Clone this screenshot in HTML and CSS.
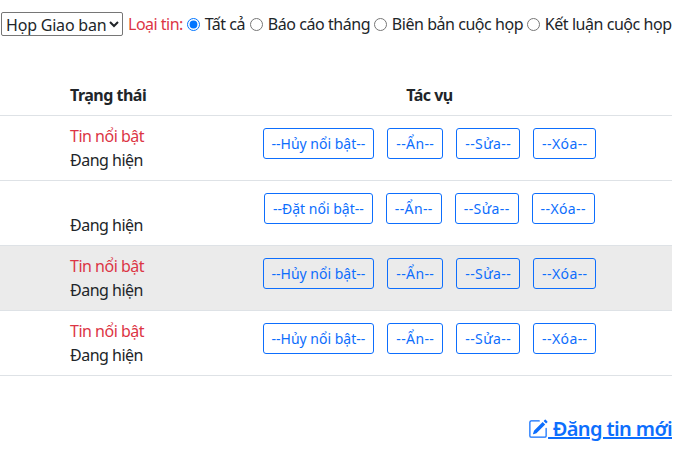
FILE: index.html
```html
<!DOCTYPE html>
<html lang="en">
<head>
  <meta charset="UTF-8">
  <meta name="viewport" content="width=device-width, initial-scale=1.0">
  <title>Đăng tin</title>
  <link rel="stylesheet" href="styles.css">
</head>
<body>
  <div class="container">
    <!-- Filter bar -->
    <div class="filter-bar">
      <select class="group-select">
        <option>Họp Giao ban</option>
      </select>
      <span class="filter-label">Loại tin:</span>
      <label class="radio"><input type="radio" name="loai" checked> Tất cả</label>
      <label class="radio"><input type="radio" name="loai"> Báo cáo tháng</label>
      <label class="radio"><input type="radio" name="loai"> Biên bản cuộc họp</label>
      <label class="radio"><input type="radio" name="loai"> Kết luận cuộc họp</label>
    </div>

    <!-- News table -->
    <table class="news-table">
      <thead>
        <tr>
          <th class="col-blank"></th>
          <th class="col-status">Trạng thái</th>
          <th class="col-actions">Tác vụ</th>
        </tr>
      </thead>
      <tbody>
        <tr>
          <td></td>
          <td><div class="hot">Tin nổi bật</div><div>Đang hiện</div></td>
          <td>
            <div class="actions">
              <button class="btn btn-wide">--Hủy nổi bật--</button>
              <button class="btn">--Ẩn--</button>
              <button class="btn">--Sửa--</button>
              <button class="btn">--Xóa--</button>
            </div>
          </td>
        </tr>
        <tr>
          <td></td>
          <td><div class="hot">&nbsp;</div><div>Đang hiện</div></td>
          <td>
            <div class="actions">
              <button class="btn btn-wide">--Đặt nổi bật--</button>
              <button class="btn">--Ẩn--</button>
              <button class="btn">--Sửa--</button>
              <button class="btn">--Xóa--</button>
            </div>
          </td>
        </tr>
        <tr class="shaded">
          <td></td>
          <td><div class="hot">Tin nổi bật</div><div>Đang hiện</div></td>
          <td>
            <div class="actions">
              <button class="btn btn-wide">--Hủy nổi bật--</button>
              <button class="btn">--Ẩn--</button>
              <button class="btn">--Sửa--</button>
              <button class="btn">--Xóa--</button>
            </div>
          </td>
        </tr>
        <tr>
          <td></td>
          <td><div class="hot">Tin nổi bật</div><div>Đang hiện</div></td>
          <td>
            <div class="actions">
              <button class="btn btn-wide">--Hủy nổi bật--</button>
              <button class="btn">--Ẩn--</button>
              <button class="btn">--Sửa--</button>
              <button class="btn">--Xóa--</button>
            </div>
          </td>
        </tr>
      </tbody>
    </table>

    <div class="footer">
      <a class="new-link" href="#">
        <svg class="new-icon" viewBox="0 0 16 16" fill="currentColor">
          <path d="M15.502 1.94a.5.5 0 0 1 0 .706L14.459 3.69l-2-2L13.502.646a.5.5 0 0 1 .707 0l1.293 1.293zm-1.75 2.456-2-2L4.939 9.21a.5.5 0 0 0-.121.196l-.805 2.414a.25.25 0 0 0 .316.316l2.414-.805a.5.5 0 0 0 .196-.12l6.813-6.814z"/>
          <path fill-rule="evenodd" d="M1 13.5A1.5 1.5 0 0 0 2.5 15h11a1.5 1.5 0 0 0 1.5-1.5v-6a.5.5 0 0 0-1 0v6a.5.5 0 0 1-.5.5h-11a.5.5 0 0 1-.5-.5v-11a.5.5 0 0 1 .5-.5H9a.5.5 0 0 0 0-1H2.5A1.5 1.5 0 0 0 1 2.5v11z"/>
        </svg>
        Đăng tin mới
      </a>
    </div>
  </div>
</body>
</html>
```

FILE: styles.css
```css
* {
  box-sizing: border-box;
}

body {
  margin: 0;
  background: #fff;
  color: #212529;
  font-family: "Noto Sans", "Open Sans", sans-serif;
  font-size: 16px;
  line-height: 24px;
  letter-spacing: -0.5px;
}

.container {
  width: 672px;
}

.filter-bar {
  display: flex;
  align-items: center;
  gap: 4px;
  height: 24px;
  margin-top: 12px;
  white-space: nowrap;
}

.group-select {
  width: 122px;
  height: 24px;
  margin-left: 1px;
  margin-right: 1px;
  font: inherit;
  letter-spacing: -0.2px;
  color: #212529;
  background: #fff;
  border: 1px solid #767676;
  border-radius: 2px;
}

.filter-label {
  color: #dc3545;
}

.radio {
  letter-spacing: -0.45px;
}

.radio:first-of-type {
  margin-right: 1px;
}

.radio input {
  margin: 0 1px 0 0;
  vertical-align: -1px;
}

.news-table {
  width: 672px;
  margin-top: 39px;
  border-collapse: collapse;
  table-layout: fixed;
}

.news-table th,
.news-table td {
  padding: 8px;
  border-bottom: 1px solid #dee2e6;
  vertical-align: top;
}

.news-table th {
  font-weight: 700;
  text-align: left;
}

.col-blank { width: 62px; }
.col-status { width: 125px; }

.news-table .col-actions {
  text-align: center;
}

.shaded {
  background: #ebebeb;
}

.hot {
  color: #dc3545;
}

.actions {
  display: flex;
  justify-content: center;
  gap: 13px;
  margin-top: 4px;
}

.btn {
  height: 31px;
  padding: 4px 8px;
  font: inherit;
  font-size: 14px;
  line-height: 21px;
  letter-spacing: 0.4px;
  color: #0d6efd;
  background: transparent;
  border: 1px solid #0d6efd;
  border-radius: 3px;
}

.btn-wide {
  letter-spacing: 0;
}

.footer {
  display: flex;
  justify-content: flex-end;
  margin-top: 38px;
}

.new-link {
  color: #0d6efd;
  font-size: 20px;
  font-weight: 600;
  line-height: 30px;
  letter-spacing: -0.6px;
}

.new-icon {
  width: 20px;
  height: 20px;
  vertical-align: -3px;
}
```
